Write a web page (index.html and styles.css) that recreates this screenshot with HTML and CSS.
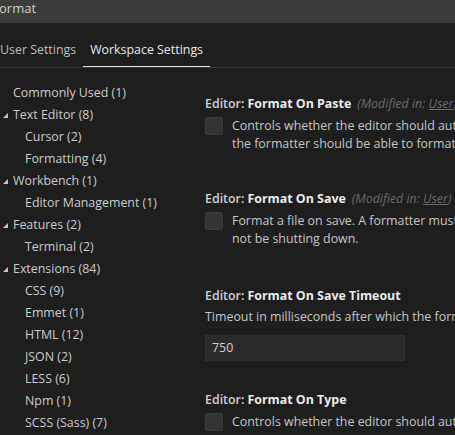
FILE: index.html
```html
<!DOCTYPE html>
<html>
<head>
<meta charset="utf-8">
<link rel="stylesheet" href="styles.css">
</head>
<body>
<div class="search"><span class="search-text">ormat</span></div>
<div class="tabs">
  <div class="tab">User Settings</div>
  <div class="tab active">Workspace Settings</div>
</div>
<div class="main">
  <div class="tree">
    <div class="node top">Commonly Used (1)</div>
    <div class="node top exp"><span class="tri"></span>Text Editor (8)</div>
    <div class="node child">Cursor (2)</div>
    <div class="node child">Formatting (4)</div>
    <div class="node top exp"><span class="tri"></span>Workbench (1)</div>
    <div class="node child">Editor Management (1)</div>
    <div class="node top exp"><span class="tri"></span>Features (2)</div>
    <div class="node child">Terminal (2)</div>
    <div class="node top exp"><span class="tri"></span>Extensions (84)</div>
    <div class="node child">CSS (9)</div>
    <div class="node child">Emmet (1)</div>
    <div class="node child">HTML (12)</div>
    <div class="node child">JSON (2)</div>
    <div class="node child">LESS (6)</div>
    <div class="node child">Npm (1)</div>
    <div class="node child">SCSS (Sass) (7)</div>
  </div>
  <div class="settings">
    <div class="setting s1">
      <div class="title">Editor: <b>Format On Paste</b><span class="mod">(Modified in: <u>User</u>)</span></div>
      <div class="row">
        <span class="check"></span>
        <div class="desc">Controls whether the editor should automatically format the pasted content. A formatter must be available and<br>the formatter should be able to format a range in a document.</div>
      </div>
    </div>
    <div class="setting s2">
      <div class="title">Editor: <b>Format On Save</b><span class="mod">(Modified in: <u>User</u>)</span></div>
      <div class="row">
        <span class="check"></span>
        <div class="desc">Format a file on save. A formatter must be available, the file must not be saved after delay, and the editor must<br>not be shutting down.</div>
      </div>
    </div>
    <div class="setting s3">
      <div class="title">Editor: <b>Format On Save Timeout</b></div>
      <div class="desc plain">Timeout in milliseconds after which the formatting that is run on file save is cancelled.</div>
      <div class="input">750</div>
    </div>
    <div class="setting s4">
      <div class="title">Editor: <b>Format On Type</b></div>
      <div class="row">
        <span class="check"></span>
        <div class="desc">Controls whether the editor should automatically format the line after typing.</div>
      </div>
    </div>
  </div>
</div>
</body>
</html>
```
FILE: styles.css
```css
html, body {
  margin: 0;
  padding: 0;
  background: #1e1e1e;
  overflow: hidden;
  width: 455px;
  height: 435px;
}
body {
  font-family: "Open Sans", "Noto Sans", sans-serif;
  font-size: 12px;
  color: #cccccc;
}
.search {
  height: 23px;
  background: #3c3c3c;
  overflow: hidden;
}
.search-text {
  display: block;
  font-size: 13px;
  line-height: 16px;
  color: #cccccc;
  margin-left: -1px;
}
.tabs {
  height: 44px;
  border-bottom: 1px solid #3a3a3a;
  display: flex;
  align-items: flex-end;
  margin-left: -7px;
  white-space: nowrap;
}
.tab {
  padding: 0 7px 6px;
  color: #bdbdbd;
  border-bottom: 1px solid transparent;
  line-height: 20px;
  font-size: 12.4px;
}
.tab.active {
  color: #e8e8e8;
  border-bottom-color: #e0e0e0;
}
.main {
  display: flex;
  white-space: nowrap;
  height: 368px;
  overflow: hidden;
}
.tree {
  width: 192px;
  flex: none;
  padding-top: 14px;
}
.node {
  height: 22px;
  line-height: 22px;
  font-size: 12.4px;
  color: #cccccc;
  position: relative;
}
.node.top { padding-left: 13px; }
.node.child { padding-left: 25px; }
.tri {
  position: absolute;
  left: 3px;
  top: 9px;
  width: 0;
  height: 0;
  border-left: 5px solid transparent;
  border-bottom: 5px solid #c5c5c5;
}
.settings {
  flex: 1;
  min-width: 0;
  padding-left: 13px;
  padding-top: 27px;
  overflow: hidden;
}
.s1 { margin-bottom: 37px; }
.s2 { margin-bottom: 39px; }
.s3 { margin-bottom: 30px; }
.title {
  font-size: 12.4px;
  line-height: 18px;
  color: #d0d0d0;
  font-weight: 600;
}
.title b {
  color: #ececec;
  font-weight: 700;
}
.mod {
  font-style: italic;
  font-weight: 400;
  color: #6b6b6b;
  margin-left: 6px;
}
.row {
  display: flex;
  align-items: flex-start;
  margin-top: 4px;
}
.check {
  flex: none;
  width: 16px;
  height: 16px;
  background: #343434;
  border: 1px solid #3e3e3e;
  border-radius: 2px;
  margin-right: 9px;
}
.desc {
  font-size: 12.4px;
  line-height: 18px;
  color: #c6c6c6;
  margin-top: 0;
}
.desc.plain {
  margin-top: 3px;
}
.input {
  margin-top: 9px;
  width: 192px;
  height: 24px;
  line-height: 24px;
  padding-left: 6px;
  background: #2a2a2a;
  border: 1px solid #2f2f2f;
  color: #d4d4d4;
  font-size: 12.4px;
}
```
